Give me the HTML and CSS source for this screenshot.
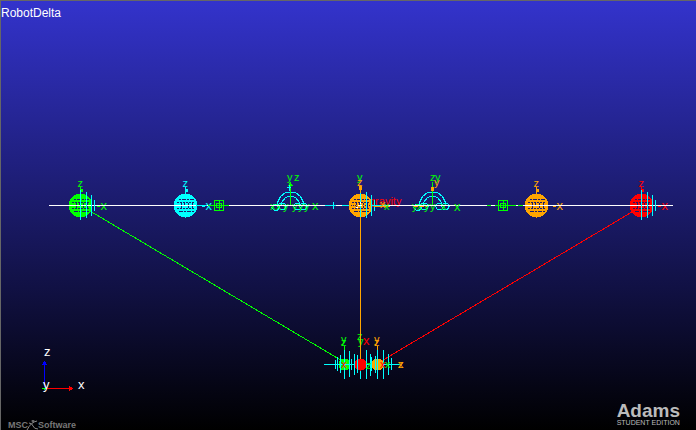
FILE: index.html
```html
<!DOCTYPE html>
<html lang="en">
<head>
<meta charset="utf-8">
<title>RobotDelta</title>
<link rel="stylesheet" href="styles.css">
</head>
<body>
<main class="viewport">
  <h1 class="model-name">RobotDelta</h1>
  <svg class="scene" viewBox="0 0 696 430" role="img" aria-label="Delta robot, front view">
    <defs>
      <g id="ball">
        <circle r="12" fill="currentColor"/>
        <g class="mesh">
          <path d="M-7 -6H8" stroke-dasharray="2 1 4 1"/>
          <path d="M-9 -3H9M-9 3H9" stroke-dasharray="2 1"/>
          <path d="M-10 0H-4M4 0H10" stroke-dasharray="1 1"/>
          <path d="M-7 6H8" stroke-dasharray="4 1 2 1"/>
          <path d="M-4 -3V3M-1 -3V-1M3 -3V3M7 -3V3" stroke-dasharray="2 1"/>
        </g>
      </g>
      <g id="marker">
        <path d="M0 -19V-11M12 0H20" stroke="currentColor"/>
        <path d="M-1 -17H2V-14H-1zM16 -1H19V1H16z" fill="currentColor"/>
        <text x="-3" y="-19">z</text>
        <text class="large" x="20" y="4">x</text>
      </g>
      <path id="ribs" d="M0 -15V15M6 -13V13M11 -10V11M14 -5V6"/>
      <path id="block" d="M-5 -5H4V5H-5zM-3 -2H2V2H-3zM0 -5V5M-5 0H4"/>
      <g id="joint" class="cyan line">
        <path d="M-13 0V-3L-10 -9L-5 -13H5L10 -9L13 -3V0M-9 0V-3L-5 -8L-2 -9H2L5 -8L9 -3V0"/>
        <path d="M-17 -1h3l3 2l-2 4h-3l-3 -3zM-11 -2h5l2 2l-2 4h-4l-3 -3zM5 -2h4l2 3l-2 3h-4l-2 -3zM11 -2h4l2 2l-2 4h-4l-2 -3z"/>
      </g>
    </defs>

    <g class="line">
      <path class="green" d="M90 211L344 362"/>
      <path class="red" d="M632 212L378 363"/>
    </g>

    <g class="green" transform="translate(80.500 205.500)"><use href="#ball"/><use href="#marker"/></g>
    <g class="cyan" transform="translate(185.500 205.500)"><use href="#ball"/><use href="#marker"/></g>
    <g class="orange" transform="translate(536.500 205.500)"><use href="#ball"/><use href="#marker"/></g>
    <g class="red" transform="translate(641.500 205.500)"><use href="#ball"/><use href="#marker"/></g>

    <g class="red"><text x="369" y="205">gravity</text></g>
    <g class="orange" transform="translate(360.500 205.500)"><use href="#ball"/></g>

    <path class="white line" d="M49 205.500H325M385 205.500H487M523 205.500H673"/>
    <path class="cyan line" d="M325 205.500H349M333.500 202V209M196 205.500H207M372 205.500H385"/>
    <path class="white line" d="M336 205.500h6"/>
    <path class="green line" d="M208 205.500H229M487 205.500H523"/>
    <path class="white line" d="M491 205.500h4M516 205.500h2"/>
    <g class="green line"><use href="#block" x="219.500" y="205.500"/><use href="#block" x="503.500" y="205.500"/></g>
    <g class="cyan line"><use href="#ribs" x="80.500" y="205"/><use href="#ribs" x="360.500" y="205"/><use href="#ribs" x="641.500" y="205"/></g>

    <use href="#joint" x="290.500" y="205.500"/>
    <g class="green">
      <text x="270" y="210">x</text><text x="276" y="210">x</text><text x="283" y="210">y</text>
      <text x="292" y="210">y</text><text x="298" y="210">y</text><text x="304" y="210">y</text><text class="large" x="312" y="210">x</text>
      <text x="287" y="181">y</text><text x="294" y="181">z</text>
      <path class="line" d="M290.500 182V205"/><path d="M288 186l2 -4l3 4z" fill="currentColor"/>
    </g>
    <path class="cyan line" d="M289.500 185V191M287 187H291"/>

    <use href="#joint" x="432.500" y="205.500"/>
    <g class="green">
      <text x="412" y="210">y</text><text x="417" y="210">x</text><text x="424" y="210">y</text>
      <text x="430" y="210">y</text><text x="441" y="210">x</text><text class="large" x="454" y="211">x</text>
      <text x="430" y="181">z</text><text x="435" y="181">y</text>
      <path class="line" d="M432.500 182V205"/>
    </g>
    <g class="orange"><text x="434" y="186">y</text><path d="M431 187h3v4h-3z" fill="currentColor"/><path class="line" d="M414 206.500H427" stroke-dasharray="4 2"/></g>

    <path class="white line" d="M270 205.500H318M411 205.500H455"/>
    <path class="orange line" d="M360.500 185V193M360.500 217V362M374 206.500H390"/>
    <g class="green"><text x="357" y="181">y</text><text x="384" y="210">x</text></g>
    <g class="orange"><text x="357" y="186">z</text><text x="380" y="208">x</text><path d="M359 186h3v4h-3z" fill="currentColor"/></g>
    <path class="white line" d="M358 205.500h4M360.500 202v2M356 207.500h2"/>

    <g class="platform">
      <circle class="green" cx="344.500" cy="364.500" r="6" fill="currentColor"/>
      <circle class="red" cx="360.500" cy="364.500" r="6" fill="currentColor"/>
      <circle class="orange" cx="377.500" cy="364.500" r="6" fill="currentColor"/>
      <path class="cyan line" d="M324 364.500H355M366 364.500H372M383 364.500H400"/>
      <path class="cyan line" d="M335.500 360V369M337.500 357V371M340.500 355V373M344.500 350V379M349.500 351V377M351.500 359V370M354.500 354V375M357.500 355V373M360.500 350V357M360.500 371V379M366.500 350V379M370.500 354V376M371.500 357V371M375.500 356V373M377.500 350V379M383.500 350V379M388.500 354V375M391.500 358V370"/>
      <g class="green"><text x="341" y="343">y</text><text x="341" y="346">z</text><text x="357" y="340">z</text><text x="358" y="345">y</text><text x="366" y="369">z</text><text x="385" y="368">x</text><path class="line" d="M344.500 346V350"/></g>
      <g class="red"><text class="large" x="363" y="345">x</text><text x="341" y="368">x</text><text x="380" y="368">x</text></g>
      <g class="orange"><text x="374" y="343">y</text><text x="374" y="346">z</text><text x="398" y="368">x</text><text x="398" y="368">z</text><path class="line" d="M377.500 346V350M360.500 325V358"/></g>
    </g>

    <g class="triad">
      <path class="blue line" d="M44.500 362V387"/><path class="blue" d="M42 365L44 361H45L47 365z" fill="currentColor"/>
      <path class="red line" d="M46 388.500H71"/><path class="red" d="M69 386L73 388V389L69 391z" fill="currentColor"/>
      <path class="green line" d="M42 388.500H46M44.500 388V390"/>
      <g class="white large"><text x="44" y="356">z</text><text x="43" y="389">y</text><text x="78" y="389">x</text></g>
    </g>
  </svg>
  <footer class="brands">
    <div class="msc">
      <span>MSC</span>
      <svg class="msc-mark" viewBox="0 0 12 10" aria-hidden="true"><path d="M1 10Q5 2 11 1M3 3Q6 3 7 6T12 9"/><circle cx="7" cy="1" r="1"/></svg>
      <span>Software</span>
    </div>
    <div class="adams"><strong>Adams</strong><small>STUDENT EDITION</small></div>
  </footer>
</main>
</body>
</html>
```
FILE: styles.css
```css
* { box-sizing: border-box; }

body {
  margin: 0;
  font-family: "Liberation Sans", Arial, sans-serif;
}

.viewport {
  position: relative;
  display: flex;
  flex-direction: column;
  justify-content: space-between;
  min-height: 100vh;
  border-top: 1px solid #666;
  border-left: 1px solid #666;
  background: linear-gradient(#3333cc, #000);
  overflow: hidden;
}

.model-name {
  margin: 0;
  padding: 5px 0;
  color: #fff;
  font-size: 12px;
  font-weight: 400;
  line-height: 14px;
}

/* The model canvas lies beneath the title and logos. */
.scene {
  position: absolute;
  inset: -1px 0 0 -1px;
  width: calc(100% + 1px);
  height: calc(100% + 1px);
  font-size: 11px;
  shape-rendering: crispEdges;
}

.scene text { fill: currentColor; }
.line { fill: none; stroke: currentColor; stroke-width: 1; }
.mesh { fill: none; stroke: #1b1b6d; }
.large { font-size: 13px; }

.green { color: #0f0; }
.cyan { color: #0ff; }
.orange { color: #ffa500; }
.red { color: #f00; }
.blue { color: #00f; }
.white { color: #fff; }

.brands {
  display: flex;
  justify-content: space-between;
  align-items: flex-end;
  padding: 0 16px 0 7px;
}

.msc {
  display: flex;
  align-items: flex-end;
  color: #777;
  font-size: 9px;
  font-weight: 700;
  line-height: 9px;
}

.msc-mark {
  width: 12px;
  height: 10px;
  margin-left: -2px;
  fill: none;
  stroke: #888;
}

.adams {
  display: flex;
  flex-direction: column;
  padding-bottom: 3px;
  color: #bbb;
}

.adams strong { font-size: 19px; line-height: 16px; }
.adams small { font-size: 7px; line-height: 8px; }
```
